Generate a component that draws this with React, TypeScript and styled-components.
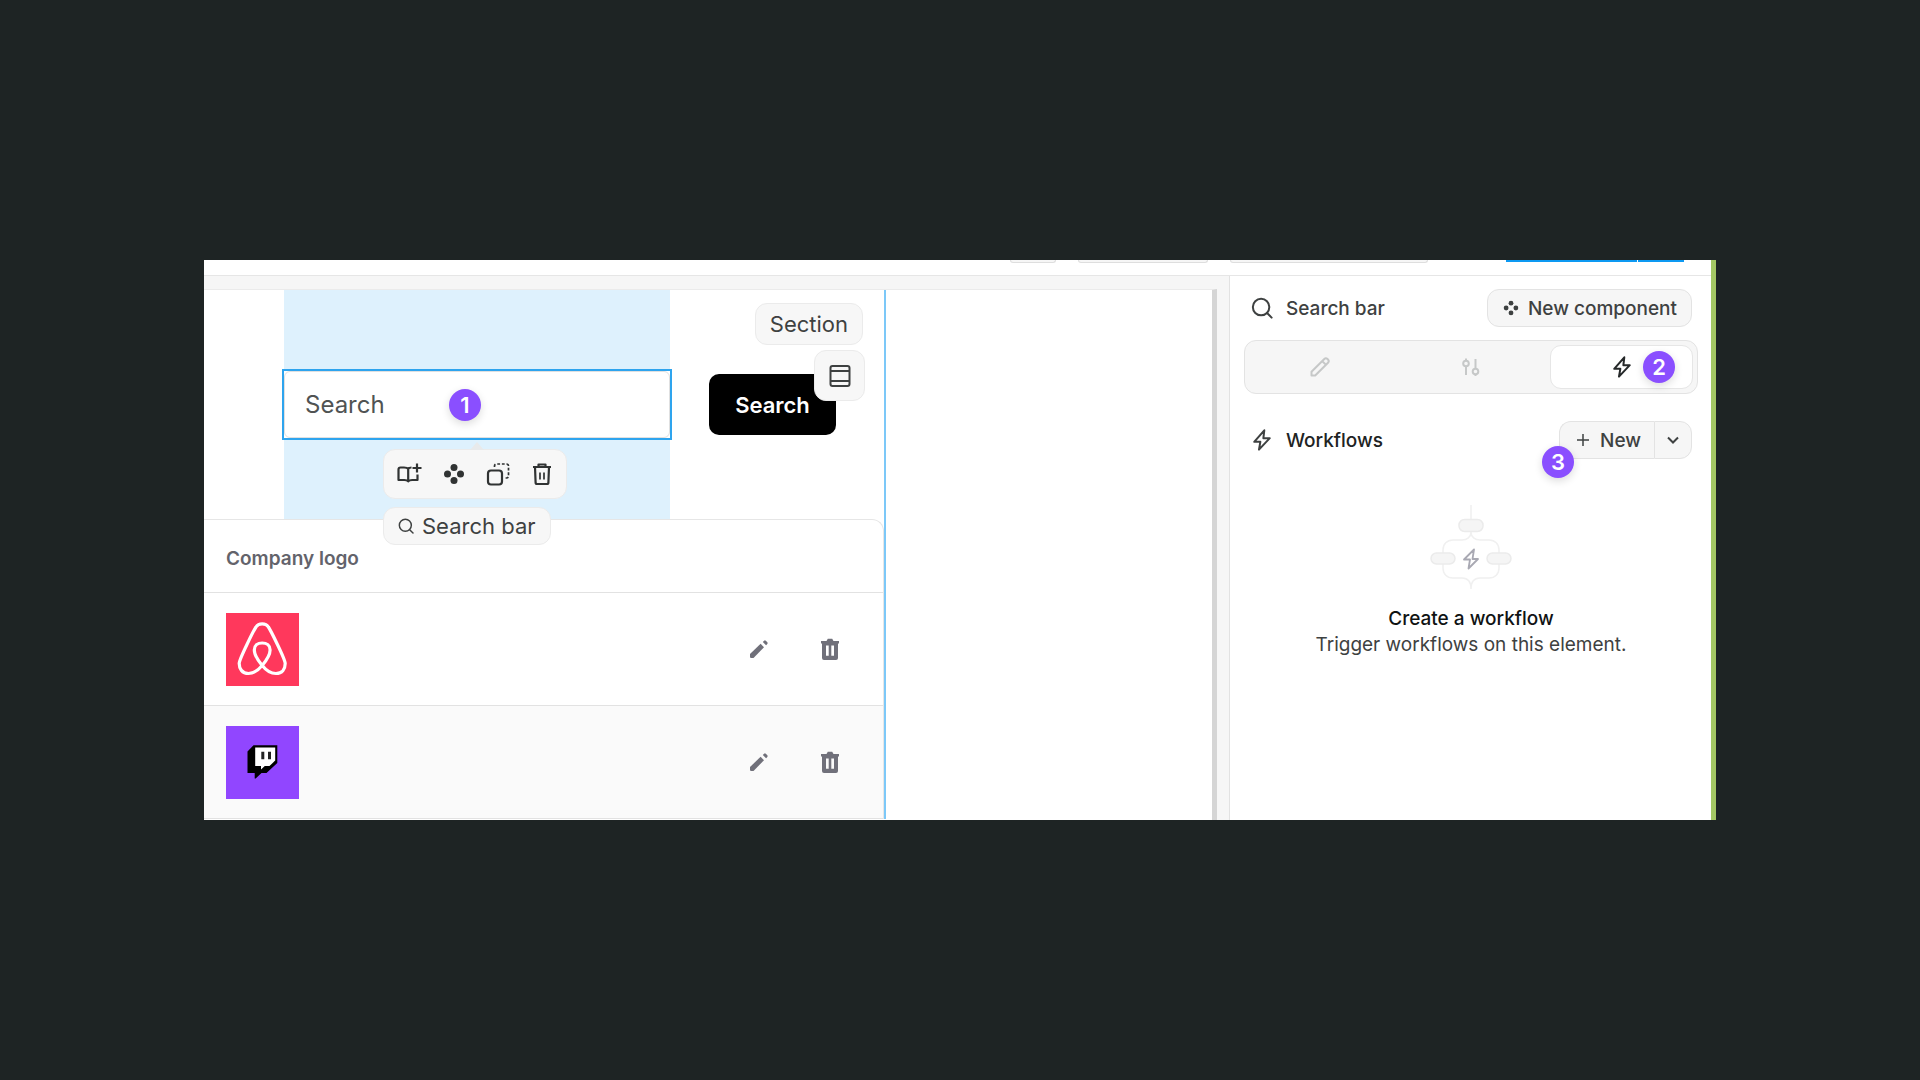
import React from "react";
import styled, { createGlobalStyle } from "styled-components";

const GlobalStyle = createGlobalStyle`
  *, *::before, *::after { box-sizing: border-box; }
  body {
    margin: 0;
    background: #1e2424;
    color: #3e4141;
    font-family: Inter, "Liberation Sans", sans-serif;
  }
  button, input { font: inherit; color: inherit; }
  button { border: 0; margin: 0; padding: 0; background: none; cursor: pointer; }
  svg { display: block; flex: none; }
`;

const Stage = styled.main`
  min-height: 100vh;
  padding: 48px 204px;
  display: flex;
  flex-direction: column;
  justify-content: center;
`;

const Frame = styled.div`
  background: #fff;
  border-right: 5px solid #a4c764;
  display: flex;
  flex-direction: column;
  overflow: hidden;
`;

const TopBar = styled.header`
  height: 16px;
  padding-right: 27px;
  border-bottom: 1px solid #e6e6e6;
  display: flex;
  justify-content: flex-end;
  align-items: flex-start;
  gap: 22px;
`;

const BarTab = styled.span<{ $w: number }>`
  width: ${(p) => p.$w}px;
  height: 3px;
  border: 1px solid #dedede;
  border-top: 0;
  border-radius: 0 0 8px 8px;
  background: #f6f6f6;
`;

const BlueTabs = styled.span`
  margin-left: 56px;
  display: flex;
  gap: 1px;
`;

const BlueTab = styled.span<{ $w: number }>`
  width: ${(p) => p.$w}px;
  height: 2px;
  background: #0d99f2;
`;

const Body = styled.div`
  display: flex;
  align-items: stretch;
`;

const Canvas = styled.section`
  flex: 1;
  min-width: 0;
  padding: 13px 12px 0 0;
  background: #f6f6f6;
  display: flex;
`;

const Page = styled.div`
  flex: 1;
  min-width: 0;
  background: #fff;
  border-top: 1px solid #ebebeb;
  border-right: 5px solid #d5d5d5;
`;

const PageSection = styled.div`
  position: relative;
  width: 682px;
  border-right: 2px solid #7cc8f8;
`;

const SearchRow = styled.form`
  height: 229px;
  padding: 0 48px 0 80px;
  display: flex;
  align-items: center;
  gap: 39px;
`;

const Highlight = styled.div`
  position: relative;
  flex: 1;
  align-self: stretch;
  background: #def1fd;
  display: flex;
  align-items: center;
`;

const Selected = styled.div`
  position: relative;
  flex: 1;
  min-width: 0;
  background: #fff;
  outline: 2px solid #2ea4ee;
`;

const SearchInput = styled.input`
  display: block;
  width: 100%;
  height: 67px;
  padding: 0 20px;
  border: 1px solid #e0e0e0;
  border-radius: 6px;
  background: #fff;
  font-size: 24px;
  outline: none;
  &::placeholder { color: #505353; opacity: 1; }
`;

const SearchButton = styled.button`
  width: 127px;
  height: 61px;
  border-radius: 10px;
  background: #000;
  color: #fff;
  font-size: 22px;
  font-weight: 600;
`;

const Badge = styled.span`
  position: absolute;
  z-index: 3;
  width: 32px;
  height: 32px;
  border-radius: 50%;
  background: #8a4fff;
  color: #fff;
  font-size: 22px;
  line-height: 32px;
  font-weight: 600;
  text-align: center;
  box-shadow: 0 3px 8px rgba(0, 0, 0, 0.14);
`;

const InputBadge = styled(Badge)`
  left: 165px;
  top: 18px;
`;

const TabBadge = styled(Badge)`
  right: 17px;
  top: 5px;
`;

const NewBadge = styled(Badge)`
  left: -17px;
  bottom: -19px;
`;

const Floating = styled.div`
  position: absolute;
  z-index: 2;
  left: 99px;
  top: 159px;
  display: flex;
  flex-direction: column;
  align-items: flex-start;
  gap: 8px;
`;

const Toolbar = styled.div`
  position: relative;
  height: 50px;
  padding: 0 12px;
  border: 1px solid #ebebeb;
  border-radius: 12px;
  background: #f7f7f7;
  display: flex;
  align-items: center;
  gap: 20px;
  color: #303333;
  &::before {
    content: "";
    position: absolute;
    left: 86px;
    top: -8px;
    border: 7px solid transparent;
    border-top: 0;
    border-bottom: 8px solid #e8eaeb;
  }
`;

const IconButton = styled.button`
  display: flex;
`;

const Chip = styled.div`
  height: 38px;
  padding: 0 14px;
  border: 1px solid #ebebeb;
  border-radius: 12px;
  background: #f7f7f7;
  display: flex;
  align-items: center;
  gap: 8px;
  font-size: 22px;
  white-space: nowrap;
`;

const SectionTools = styled.div`
  position: absolute;
  z-index: 2;
  right: 19px;
  top: 13px;
  display: flex;
  flex-direction: column;
  align-items: flex-end;
  gap: 5px;
`;

const SectionChip = styled(Chip)`
  height: 42px;
  margin-right: 2px;
`;

const SquareButton = styled.button`
  width: 51px;
  height: 51px;
  border: 1px solid #ebebeb;
  border-radius: 12px;
  background: #f7f7f7;
  display: flex;
  align-items: center;
  justify-content: center;
`;

const Table = styled.table`
  width: 100%;
  border-collapse: separate;
  border-spacing: 0;
  border: 1px solid #e6e6e6;
  border-left: 0;
  border-bottom: 0;
  border-top-right-radius: 12px;
  margin-bottom: 1px;
`;

const HeadCell = styled.th`
  height: 73px;
  padding: 4px 0 0 22px;
  border-bottom: 1px solid #e2e2e2;
  text-align: left;
  font-size: 19px;
  font-weight: 600;
  color: #63636b;
`;

const Row = styled.tr<{ $alt?: boolean }>`
  background: ${(p) => (p.$alt ? "#fafafa" : "#fff")};
`;

const Cell = styled.td`
  height: 113px;
  padding: 0 0 0 22px;
  border-bottom: 1px solid #e2e2e2;
`;

const Actions = styled.div`
  padding-right: 42px;
  display: flex;
  justify-content: flex-end;
  gap: 48px;
  color: #70707a;
`;

const Panel = styled.aside`
  width: 482px;
  border-left: 1px solid #e2e2e2;
  padding: 13px 13px 0 14px;
  display: flex;
  flex-direction: column;
`;

const PanelRow = styled.div`
  padding: 0 6px 0 7px;
  display: flex;
  align-items: center;
  justify-content: space-between;
`;

const PanelTitle = styled.h2<{ $dark?: boolean }>`
  margin: 0;
  display: flex;
  align-items: center;
  gap: 13px;
  font-size: 19px;
  font-weight: 500;
  color: ${(p) => (p.$dark ? "#202323" : "#3e4141")};
  svg { color: #3e4141; }
`;

const PillButton = styled.button`
  height: 38px;
  padding: 0 14px;
  border: 1px solid #e3e3e3;
  border-radius: 12px;
  background: #f6f6f6;
  display: flex;
  align-items: center;
  gap: 8px;
  font-size: 19px;
  font-weight: 500;
`;

const Tabs = styled.div`
  margin: 13px 0 27px;
  height: 54px;
  padding: 4px;
  border: 1px solid #e3e3e3;
  border-radius: 12px;
  background: #f6f6f6;
  display: grid;
  grid-template-columns: repeat(3, 1fr);
  gap: 8px;
`;

const Tab = styled.button<{ $active?: boolean }>`
  position: relative;
  border: 1px solid ${(p) => (p.$active ? "#e6e6e6" : "transparent")};
  border-radius: 11px;
  background: ${(p) => (p.$active ? "#fff" : "transparent")};
  color: ${(p) => (p.$active ? "#26292a" : "#c6c8c8")};
  display: flex;
  align-items: center;
  justify-content: center;
`;

const Split = styled.div`
  position: relative;
  display: flex;
`;

const SplitMain = styled(PillButton)`
  padding: 0 13px 0 16px;
  border-radius: 12px 0 0 12px;
  border-right: 0;
  gap: 10px;
`;

const SplitMore = styled(PillButton)`
  padding: 0 11px;
  border-radius: 0 12px 12px 0;
`;

const Empty = styled.div`
  margin-top: 46px;
  display: flex;
  flex-direction: column;
  align-items: center;
  text-align: center;
`;

const EmptyTitle = styled.h3`
  margin: 15px 0 0;
  font-size: 19px;
  line-height: 26px;
  font-weight: 500;
  color: #101313;
`;

const EmptyText = styled.p`
  margin: 0;
  font-size: 19px;
  line-height: 26px;
`;

const boltPath = "M14.500 1.500 3.500 14h6.700L8.700 22.500 20.500 10h-7z";

const Bolt = ({ size = 22, width = 2.2 }: { size?: number; width?: number }) => (
  <svg width={size} height={size} viewBox="0 0 24 24" fill="none" stroke="currentColor" strokeWidth={width} strokeLinejoin="round">
    <path d={boltPath} />
  </svg>
);

const Magnifier = ({ size, width = 2.2 }: { size: number; width?: number }) => (
  <svg width={size} height={size} viewBox="0 0 24 24" fill="none" stroke="currentColor" strokeWidth={width} strokeLinecap="round">
    <circle cx="11" cy="11" r="9" />
    <path d="M17.5 17.5 22.5 22.5" />
  </svg>
);

const Dots = ({ size, r, d }: { size: number; r: number; d: number }) => (
  <svg width={size} height={size} viewBox="0 0 24 24" fill="currentColor">
    <circle cx="12" cy={12 - d} r={r} />
    <circle cx="12" cy={12 + d} r={r} />
    <circle cx={12 - d} cy="12" r={r} />
    <circle cx={12 + d} cy="12" r={r} />
  </svg>
);

const BookPlus = () => (
  <svg width="26" height="24" viewBox="0 0 26 24" fill="none" stroke="currentColor" strokeWidth="2.200" strokeLinejoin="round">
    <path d="M15.500 5.500c-1.600 0-2.700.5-3.300 1.300C11.400 5.800 9.800 5.500 8 5.500H4.500a2 2 0 0 0-2 2V18h5.800c1.800 0 3.200.5 3.900 1.400.7-.9 2.100-1.400 3.900-1.400h5.400v-5.500M12.200 6.800v12.600" />
    <path d="M21 1.500v9M16.500 6h9" />
  </svg>
);

const Duplicate = () => (
  <svg width="24" height="24" viewBox="0 0 24 24" fill="none" stroke="currentColor" strokeWidth="2.200">
    <rect x="2" y="8.500" width="14" height="14" rx="3" />
    <path d="M8.500 5V4a2 2 0 0 1 2-2H20.500a2 2 0 0 1 2 2v10a2 2 0 0 1-2 2h-2" strokeDasharray="2.800 1.800" strokeWidth="1.700" />
  </svg>
);

const Bin = () => (
  <svg width="24" height="24" viewBox="0 0 24 24" fill="none" stroke="currentColor" strokeWidth="2.200" strokeLinejoin="round">
    <path d="M3 5h18M8.500 4.500V2.500h7v2M5 5l.6 15.500c0 1 .6 1.500 1.500 1.500h9.800c.9 0 1.500-.5 1.500-1.500L19 5" />
    <path d="M10 10.500v7M14 10.500v7" strokeWidth="1.700" />
  </svg>
);

const SolidPencil = () => (
  <svg width="24" height="24" viewBox="0 0 24 24" fill="currentColor">
    <path d="M3 20.200v-3.200L13.600 6.800l3.400 3.400L6.500 21H3.800z" />
    <path d="m15.800 4.900 1.300-1.200a1.200 1.200 0 0 1 1.700 0l1.500 1.500a1.200 1.200 0 0 1 0 1.700l-1.200 1.300z" />
  </svg>
);

const SolidBin = () => (
  <svg width="22" height="24" viewBox="0 0 22 24" fill="currentColor" fillRule="evenodd">
    <path d="M2 4h5.500L8.800 1.800h4.400L14.500 4H20v2.500h-1V21a2 2 0 0 1-2 2H5a2 2 0 0 1-2-2V6.500H2zM7 8.500v10.300h2.700V8.500zm5.300 0v10.300H15V8.500z" />
  </svg>
);

const SectionIcon = () => (
  <svg width="22" height="24" viewBox="0 0 22 24" fill="none" stroke="currentColor" strokeWidth="2">
    <rect x="1.500" y="2" width="19" height="20" rx="2" />
    <path d="M1.500 7h19M1.500 17h19" />
  </svg>
);

const PencilOutline = () => (
  <svg width="22" height="22" viewBox="0 0 22 22" fill="none" stroke="currentColor" strokeWidth="2" strokeLinejoin="round">
    <path d="M2.500 19.500v-3.700L15.300 3a2.300 2.300 0 0 1 3.200 0l.500.500a2.300 2.300 0 0 1 0 3.200L6.200 19.500zM13.200 5.100l3.700 3.700" />
  </svg>
);

const Sliders = () => (
  <svg width="20" height="20" viewBox="0 0 20 20" fill="none" stroke="currentColor" strokeWidth="2">
    <circle cx="5" cy="6.500" r="2.800" />
    <path d="M5 1.500v2M5 9.500V18M14.500 2v9.500" />
    <circle cx="14.500" cy="14.500" r="2.800" />
    <path d="M14.500 17.500V19" />
  </svg>
);

const AirbnbLogo = () => (
  <svg width="73" height="73" viewBox="0 0 73 73" role="img" aria-label="Airbnb">
    <rect width="73" height="73" fill="#ff385c" />
    <path
      d="M36.200 52.500C32 57.500 28 60.500 22.500 60.500c-6.500 0-9.300-5-9.300-10C13.200 46 28 17 30 14c1.500-2.500 3.500-3.200 6.200-3.200s4.700.7 6.200 3.200c2 3 16.800 32 16.800 36.500 0 5-2.800 10-9.300 10-5.500 0-9.700-3-13.700-8-5-6-7.900-11-7.900-15.500 0-4.500 3.400-7 7.900-7s7.900 2.500 7.900 7c0 4.500-2.900 9.500-7.900 15.500z"
      fill="none"
      stroke="#fff"
      strokeWidth="3.200"
    />
  </svg>
);

const TwitchLogo = () => (
  <svg width="73" height="73" viewBox="0 0 73 73" role="img" aria-label="Twitch">
    <rect width="73" height="73" fill="#9146ff" />
    <path d="M27.500 19.300h23.800V37L40.500 47h-5l-5.800 5.500h-1V47h-7.200V25.500z" fill="#000" />
    <path d="M29.200 21.600h20v13L43.500 40h-4.700L35 43.600V40h-5.800z" fill="#fff" />
    <path d="M35.300 25.800h3v7.400h-3zM42 25.800h3v7.400h-3z" fill="#222" />
  </svg>
);

const WorkflowArt = () => (
  <svg width="82" height="86" viewBox="0 0 82 86" fill="none" stroke="#f0f0f0" strokeWidth="1.500">
    <path d="M41 0v15M41 27c0 5-4 8-9 8h-9c-6 0-10 4-10 10v18c0 6 4 10 10 10h9c5 0 9 3 9 11M41 27c0 5 4 8 9 8h9c6 0 10 4 10 10v18c0 6-4 10-10 10h-9c-5 0-9 3-9 11" />
    <g fill="#f5f5f5" stroke="#ebebeb">
      <rect x="29" y="14.500" width="24" height="12" rx="5.500" />
      <rect x="1" y="48" width="24" height="11" rx="5.500" />
      <rect x="57" y="48" width="24" height="11" rx="5.500" />
    </g>
    <path d="M44 44.500 34 54.500h6L38.500 63.500l9.500-9.500H42.500z" stroke="#a9a9b3" strokeWidth="1.800" strokeLinejoin="round" />
  </svg>
);

const companies = [
  { name: "Airbnb", Logo: AirbnbLogo },
  { name: "Twitch", Logo: TwitchLogo },
];

export default function App() {
  return (
    <>
      <GlobalStyle />
      <Stage>
        <Frame>
          <TopBar aria-hidden>
            <BarTab $w={46} />
            <BarTab $w={130} />
            <BarTab $w={198} />
            <BlueTabs>
              <BlueTab $w={131} />
              <BlueTab $w={46} />
            </BlueTabs>
          </TopBar>
          <Body>
            <Canvas>
              <Page>
                <PageSection>
                  <SearchRow onSubmit={(e) => e.preventDefault()}>
                    <Highlight>
                      <Selected>
                        <SearchInput type="text" placeholder="Search" aria-label="Search" />
                        <InputBadge>1</InputBadge>
                      </Selected>
                      <Floating>
                        <Toolbar>
                          <IconButton type="button" aria-label="Add to library"><BookPlus /></IconButton>
                          <IconButton type="button" aria-label="Make component"><Dots size={24} r={3.5} d={6.5} /></IconButton>
                          <IconButton type="button" aria-label="Duplicate"><Duplicate /></IconButton>
                          <IconButton type="button" aria-label="Delete"><Bin /></IconButton>
                        </Toolbar>
                        <Chip>
                          <Magnifier size={16} />
                          Search bar
                        </Chip>
                      </Floating>
                    </Highlight>
                    <SearchButton type="submit">Search</SearchButton>
                  </SearchRow>
                  <SectionTools>
                    <SectionChip>Section</SectionChip>
                    <SquareButton type="button" aria-label="Section layout"><SectionIcon /></SquareButton>
                  </SectionTools>
                  <Table>
                    <thead>
                      <tr>
                        <HeadCell colSpan={2}>Company logo</HeadCell>
                      </tr>
                    </thead>
                    <tbody>
                      {companies.map(({ name, Logo }, i) => (
                        <Row key={name} $alt={i % 2 === 1}>
                          <Cell><Logo /></Cell>
                          <Cell>
                            <Actions>
                              <IconButton type="button" aria-label={`Edit ${name}`}><SolidPencil /></IconButton>
                              <IconButton type="button" aria-label={`Delete ${name}`}><SolidBin /></IconButton>
                            </Actions>
                          </Cell>
                        </Row>
                      ))}
                    </tbody>
                  </Table>
                </PageSection>
              </Page>
            </Canvas>
            <Panel>
              <PanelRow>
                <PanelTitle><Magnifier size={22} />Search bar</PanelTitle>
                <PillButton type="button"><Dots size={18} r={3.2} d={6.5} />New component</PillButton>
              </PanelRow>
              <Tabs role="tablist">
                <Tab type="button" role="tab" aria-label="Design"><PencilOutline /></Tab>
                <Tab type="button" role="tab" aria-label="Settings"><Sliders /></Tab>
                <Tab type="button" role="tab" aria-label="Workflows" aria-selected $active>
                  <Bolt />
                  <TabBadge>2</TabBadge>
                </Tab>
              </Tabs>
              <PanelRow>
                <PanelTitle $dark><Bolt />Workflows</PanelTitle>
                <Split>
                  <SplitMain type="button">
                    <svg width="14" height="14" viewBox="0 0 14 14" stroke="currentColor" strokeWidth="1.500"><path d="M7 1v12M1 7h12" /></svg>
                    New
                  </SplitMain>
                  <SplitMore type="button" aria-label="More workflow options">
                    <svg width="14" height="14" viewBox="0 0 14 14" fill="none" stroke="currentColor" strokeWidth="2"><path d="m2 4.500 5 5 5-5" /></svg>
                  </SplitMore>
                  <NewBadge>3</NewBadge>
                </Split>
              </PanelRow>
              <Empty>
                <WorkflowArt />
                <EmptyTitle>Create a workflow</EmptyTitle>
                <EmptyText>Trigger workflows on this element.</EmptyText>
              </Empty>
            </Panel>
          </Body>
        </Frame>
      </Stage>
    </>
  );
}
